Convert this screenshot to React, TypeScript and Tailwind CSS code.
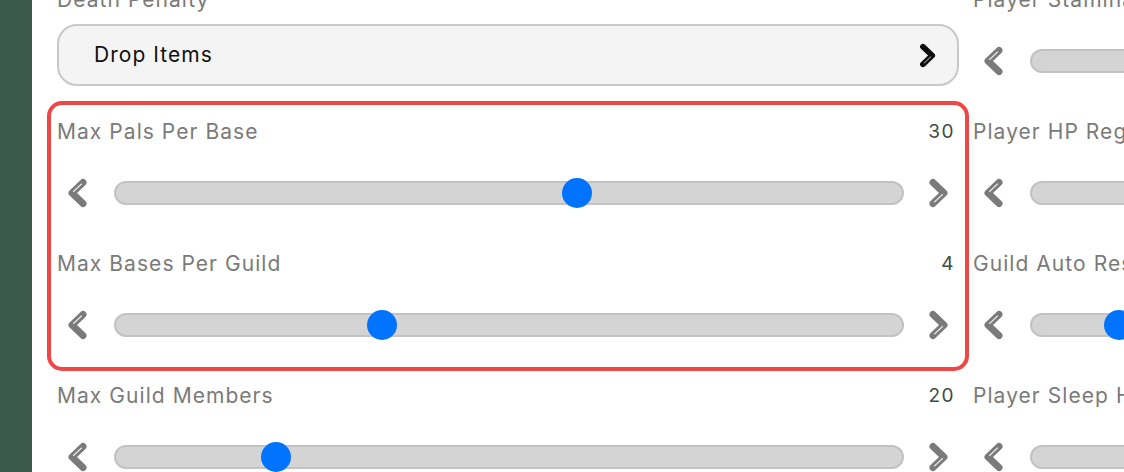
import React from "react";

const FONT = { fontFamily: "Inter, 'Noto Sans', sans-serif" };

function Chevron({ dir, color = "#7a7a7a", w = 22, h = 30 }: { dir: "left" | "right"; color?: string; w?: number; h?: number }) {
  const flip = dir === "right";
  return (
    <svg width={w} height={h} viewBox="0 0 22 30" style={{ transform: flip ? "scaleX(-1)" : undefined }}>
      <path d="M17 4.5 L6 15 L17 25.5" fill="none" stroke={color} strokeWidth={7} strokeLinecap="round" strokeLinejoin="round" />
      {flip ? (
        <path d="M7.5 16.5 L15.5 24" fill="none" stroke="#ffffff" strokeOpacity={0.85} strokeWidth={1.1} strokeLinecap="round" />
      ) : (
        <path d="M7.5 13.5 L15.5 6" fill="none" stroke="#ffffff" strokeOpacity={0.85} strokeWidth={1.1} strokeLinecap="round" />
      )}
    </svg>
  );
}

function SliderItem({ label, value, pos }: { label: string; value?: string; pos?: number }) {
  return (
    <div className="flex flex-col h-[132px]">
      <div className="h-[40px] flex items-center justify-between pr-[4px] pt-[2px]">
        <span className="text-[21px] text-[#7a7a7a] tracking-[1.05px] whitespace-nowrap">{label}</span>
        {value !== undefined && <span className="text-[19px] text-[#3e4b46] tracking-[1.5px]">{value}</span>}
      </div>
      <div className="mt-[20px] h-[44px] flex items-center">
        <div className="w-[57px] flex items-center pl-[9px]">
          <Chevron dir="left" />
        </div>
        <div className="relative flex-1 h-[24px] rounded-full bg-[#d4d4d4] border-2 border-[#c2c2c2]">
          {pos !== undefined && (
            <div
              className="absolute top-1/2 w-[30px] h-[30px] -mt-[15px] -ml-[15px] rounded-full bg-[#0073ff]"
              style={{ left: `${pos}%` }}
            />
          )}
        </div>
        <div className="w-[55px] flex items-center pl-[24px]">
          <Chevron dir="right" />
        </div>
      </div>
    </div>
  );
}

function DropdownItem({ label, value }: { label: string; value: string }) {
  return (
    <div className="flex flex-col h-[132px]">
      <div className="h-[40px] flex items-center pt-[2px]">
        <span className="text-[21px] text-[#7a7a7a] tracking-[1.05px]">{label}</span>
      </div>
      <div className="mt-[5px] h-[62px] rounded-[20px] border-2 border-[#c8c8c8] bg-[#f4f4f4] flex items-center justify-between pl-[35px] pr-[19px]">
        <span className="text-[21px] text-[#111111] tracking-[1.05px]">{value}</span>
        <Chevron dir="right" color="#0a0a0a" w={20} h={25} />
      </div>
    </div>
  );
}

export default function App() {
  return (
    <div className="flex w-[1124px] h-[472px] overflow-hidden bg-white" style={FONT}>
      <div className="w-[32px] shrink-0 bg-[#3c5a4b]" />
      <div className="flex-1 overflow-hidden">
        <div className="-mt-[21px] pl-[25px] grid grid-cols-[902px_902px] gap-x-[14px]">
          <div className="flex flex-col">
            <DropdownItem label="Death Penalty" value="Drop Items" />
            <div className="relative">
              <div className="absolute -top-[10px] -left-[10px] -right-[10px] bottom-[4px] border-4 border-[#ef4646] rounded-[15px] pointer-events-none" />
              <SliderItem label="Max Pals Per Base" value="30" pos={58.7} />
              <SliderItem label="Max Bases Per Guild" value="4" pos={33.9} />
            </div>
            <SliderItem label="Max Guild Members" value="20" pos={20.4} />
          </div>
          <div className="flex flex-col">
            <SliderItem label="Player Stamina Reduction Rate" value="1" />
            <SliderItem label="Player HP Regen Rate" value="1" />
            <SliderItem label="Guild Auto Reset Time" value="72" pos={11.1} />
            <SliderItem label="Player Sleep HP Regen Rate" value="1" />
          </div>
        </div>
      </div>
    </div>
  );
}
